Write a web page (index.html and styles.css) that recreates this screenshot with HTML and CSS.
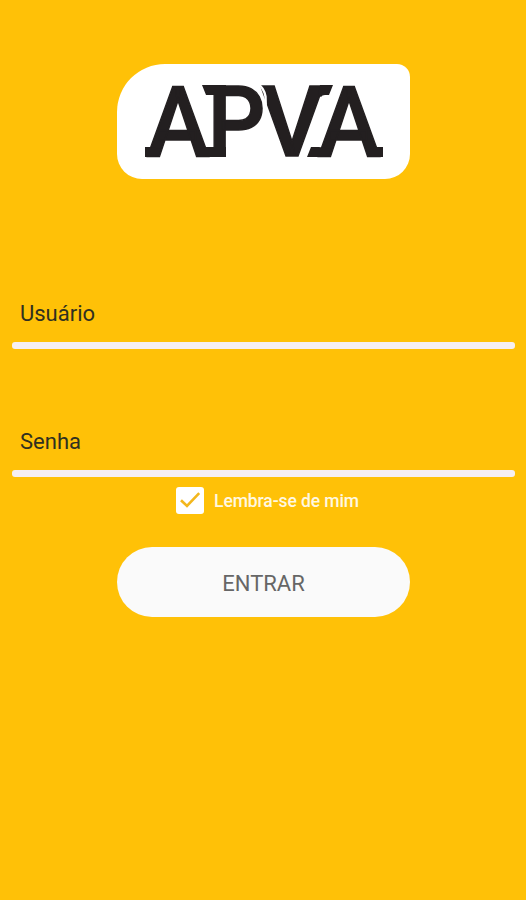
FILE: index.html
```html
<!DOCTYPE html>
<html lang="pt-BR">
<head>
<meta charset="utf-8">
<meta name="viewport" content="width=device-width, initial-scale=1">
<title>APVA</title>
<link rel="stylesheet" href="styles.css">
</head>
<body>
<main class="login">
  <div class="brand">
    <svg class="wordmark" viewBox="0 0 240 76" role="img" aria-label="APVA">
      <g class="letters">
        <text x="2.5" y="73.2" textLength="63" lengthAdjust="spacingAndGlyphs">A</text>
        <text x="63.5" y="73.2" textLength="58" lengthAdjust="spacingAndGlyphs">P</text>
        <text x="116" y="73.2" textLength="64" lengthAdjust="spacingAndGlyphs">V</text>
        <text x="173.5" y="73.2" textLength="63" lengthAdjust="spacingAndGlyphs">A</text>
      </g>
      <g class="serifs">
        <path d="M1 64h6l10 2-2 5q-1 3-4 3H1z"/>
        <path d="M53 64h29v10H57q-3 0-4-3z"/>
        <path d="M58 2h24v10H62z"/>
        <path d="M176 2h13l-4 10h-4q-3 0-4 2l-3-2z"/>
        <path d="M167 64h8l12 2-2 5q-1 3-4 3h-18z"/>
        <path d="M224 64h15v10h-11q-3 0-4-3z"/>
      </g>
      <path class="gap" d="M113 .5q7 4 8.5 13q1 8-1 16"/>
    </svg>
  </div>
  <form class="form">
    <label class="field"><span>Usuário</span></label>
    <label class="field password"><span>Senha</span></label>
    <label class="remember">
      <svg class="check" viewBox="0 0 28 28" aria-hidden="true">
        <rect width="28" height="27" rx="3"/>
        <path d="M5 13.2l6 5.8L23.2 6.2"/>
      </svg>
      <span>Lembra-se de mim</span>
    </label>
    <button class="submit" type="button">ENTRAR</button>
  </form>
</main>
</body>
</html>
```
FILE: styles.css
```css
* { box-sizing: border-box; }
body {
  margin: 0;
  background: #ffc107;
  font-family: Roboto, "Liberation Sans", sans-serif;
}
.login {
  display: flex;
  flex-direction: column;
  align-items: center;
  min-height: 900px;
  padding: 64px 11px 0 12px;
}
.brand {
  width: 293px;
  height: 115px;
  padding: 19px 26px 0 27px;
  background: #fff;
  border-radius: 48px 13px 25px 25px;
}
.wordmark {
  display: block;
  width: 240px;
  height: 76px;
  overflow: visible;
}
.letters {
  font-size: 99px;
  font-weight: 500;
  fill: #231f20;
  stroke: #231f20;
  stroke-width: 1.4px;
}
.serifs { fill: #231f20; }
.gap {
  fill: none;
  stroke: #fff;
  stroke-width: 2.4px;
}
.form {
  display: flex;
  flex-direction: column;
  align-items: center;
  width: 100%;
  margin-top: 106px;
}
.field {
  width: 100%;
  height: 64px;
  padding: 15px 8px 0;
  position: relative;
  color: #303020;
  font-size: 22px;
  line-height: 28px;
}
.field::after {
  content: "";
  position: absolute;
  left: 0;
  right: 0;
  bottom: 0;
  height: 7px;
  border-radius: 3px;
  background: #f6eff2;
}
.password { margin-top: 64px; }
.remember {
  display: flex;
  align-items: center;
  gap: 10px;
  height: 28px;
  margin: 10px 0 0 8px;
  color: #fff8e1;
  font-size: 17.5px;
  font-weight: 500;
  letter-spacing: -0.1px;
  white-space: nowrap;
}
.check { width: 28px; height: 28px; }
.check rect { fill: #fff; }
.check path {
  fill: none;
  stroke: #f3b71d;
  stroke-width: 2.6;
}
.submit {
  width: 293px;
  height: 70px;
  margin-top: 32px;
  padding: 2px 0 0;
  border: 0;
  border-radius: 36px;
  background: #fafafa;
  color: #666;
  font: 400 22px Roboto, "Liberation Sans", sans-serif;
}
```
